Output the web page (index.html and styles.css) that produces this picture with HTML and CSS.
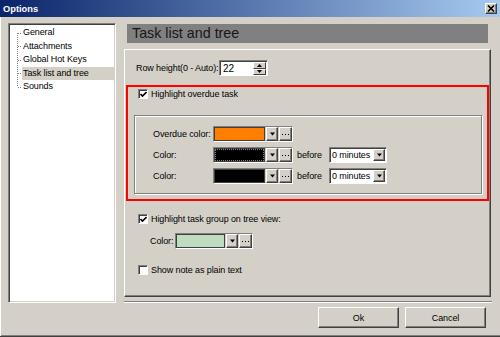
FILE: index.html
```html
<!DOCTYPE html>
<html>
<head>
    <title>Options</title>
    <link rel="stylesheet" href="styles.css">
</head>
<body>
    <div class="window">
        <div class="titlebar">
            <span class="title">Options</span>
            <span class="close">
                <svg width="8" height="7" viewBox="0 0 8 7"><path d="M1 0.5 L7 6.5 M7 0.5 L1 6.5" stroke="#000" stroke-width="1.6"/></svg>
            </span>
        </div>
        <div class="body">
            <div class="main">
                <div class="tree">
                    <svg class="tree-lines" width="5" height="68" viewBox="0 0 5 68">
                        <g stroke="#808080" stroke-dasharray="1 1" fill="none">
                            <path d="M0.5 7 V61"/>
                            <path d="M1 7.5 H5 M1 20.5 H5 M1 34.5 H5 M1 47.5 H5 M1 61.5 H5"/>
                        </g>
                    </svg>
                    <div class="tree-items">
                        <div class="tree-item">General</div>
                        <div class="tree-item">Attachments</div>
                        <div class="tree-item">Global Hot Keys</div>
                        <div class="tree-item selected">Task list and tree</div>
                        <div class="tree-item">Sounds</div>
                    </div>
                </div>
                <div class="page">
                    <div class="page-header">Task list and tree</div>
                    <div class="page-panel">
                        <div class="field-row">
                            <span class="row-label">Row height(0 - Auto):</span>
                            <div class="spin">
                                <span class="spin-value">22</span>
                                <div class="spin-buttons">
                                    <span class="spin-btn"><svg width="5" height="3" viewBox="0 0 5 3"><path d="M2.5 0 L5 3 L0 3 Z" fill="#000"/></svg></span>
                                    <span class="spin-btn"><svg width="5" height="3" viewBox="0 0 5 3"><path d="M0 0 L5 0 L2.5 3 Z" fill="#000"/></svg></span>
                                </div>
                            </div>
                        </div>

                        <div class="red-box">
                            <label class="check-row">
                                <span class="checkbox"><svg width="7" height="7" viewBox="0 0 7 7"><path d="M0.5 3 L2.5 5 L6.5 1" stroke="#000" stroke-width="1.6" fill="none"/></svg></span>
                                Highlight overdue task
                            </label>
                            <div class="group">
                                <div class="color-row">
                                    <span class="color-label">Overdue color:</span>
                                    <div class="color-picker">
                                        <span class="swatch" style="background:#ff8000"></span>
                                        <span class="arrow-btn"><svg width="5" height="4" viewBox="0 0 5 4"><path d="M0 0.5 L5 0.5 L2.5 3.5 Z" fill="#000"/></svg></span>
                                        <span class="dots-btn"><svg width="7" height="1" viewBox="0 0 7 1"><path d="M0 0h1v1H0zM3 0h1v1H3zM6 0h1v1H6z" fill="#000"/></svg></span>
                                    </div>
                                </div>
                                <div class="color-row">
                                    <span class="color-label">Color:</span>
                                    <div class="color-picker">
                                        <span class="swatch focused" style="background:#000"></span>
                                        <span class="arrow-btn"><svg width="5" height="4" viewBox="0 0 5 4"><path d="M0 0.5 L5 0.5 L2.5 3.5 Z" fill="#000"/></svg></span>
                                        <span class="dots-btn"><svg width="7" height="1" viewBox="0 0 7 1"><path d="M0 0h1v1H0zM3 0h1v1H3zM6 0h1v1H6z" fill="#000"/></svg></span>
                                    </div>
                                    <span class="before">before</span>
                                    <div class="combo">
                                        <span class="combo-value">0 minutes</span>
                                        <span class="arrow-btn"><svg width="5" height="4" viewBox="0 0 5 4"><path d="M0 0.5 L5 0.5 L2.5 3.5 Z" fill="#000"/></svg></span>
                                    </div>
                                </div>
                                <div class="color-row">
                                    <span class="color-label">Color:</span>
                                    <div class="color-picker">
                                        <span class="swatch" style="background:#000"></span>
                                        <span class="arrow-btn"><svg width="5" height="4" viewBox="0 0 5 4"><path d="M0 0.5 L5 0.5 L2.5 3.5 Z" fill="#000"/></svg></span>
                                        <span class="dots-btn"><svg width="7" height="1" viewBox="0 0 7 1"><path d="M0 0h1v1H0zM3 0h1v1H3zM6 0h1v1H6z" fill="#000"/></svg></span>
                                    </div>
                                    <span class="before">before</span>
                                    <div class="combo">
                                        <span class="combo-value">0 minutes</span>
                                        <span class="arrow-btn"><svg width="5" height="4" viewBox="0 0 5 4"><path d="M0 0.5 L5 0.5 L2.5 3.5 Z" fill="#000"/></svg></span>
                                    </div>
                                </div>
                            </div>
                        </div>

                        <label class="check-row group-check">
                            <span class="checkbox"><svg width="7" height="7" viewBox="0 0 7 7"><path d="M0.5 3 L2.5 5 L6.5 1" stroke="#000" stroke-width="1.6" fill="none"/></svg></span>
                            Highlight task group on tree view:
                        </label>
                        <div class="color-row tree-color">
                            <span class="small-label">Color:</span>
                            <div class="color-picker">
                                <span class="swatch short" style="background:#c0dcc0"></span>
                                <span class="arrow-btn"><svg width="5" height="4" viewBox="0 0 5 4"><path d="M0 0.5 L5 0.5 L2.5 3.5 Z" fill="#000"/></svg></span>
                                <span class="dots-btn"><svg width="7" height="1" viewBox="0 0 7 1"><path d="M0 0h1v1H0zM3 0h1v1H3zM6 0h1v1H6z" fill="#000"/></svg></span>
                            </div>
                        </div>
                        <label class="check-row note-check">
                            <span class="checkbox"></span>
                            Show note as plain text
                        </label>
                    </div>
                    <div class="separator"></div>
                </div>
            </div>
            <div class="footer">
                <button class="btn">Ok</button>
                <button class="btn">Cancel</button>
            </div>
        </div>
    </div>
</body>
</html>
```

FILE: styles.css
```css
body {
    margin: 0;
    font-family: "Liberation Sans", Arial, sans-serif;
    font-size: 9px;
    letter-spacing: -0.1px;
    color: #000;
}
.window {
    width: 500px;
    height: 337px;
    box-sizing: border-box;
    background-color: #d4d0c8;
    border-bottom: 1px solid #404040;
    box-shadow: inset 1px 0 0 #fff, inset 0 -1px 0 #808080;
    display: flex;
    flex-direction: column;
}
.titlebar {
    height: 17px;
    display: flex;
    align-items: center;
    padding: 0 3px;
    background: linear-gradient(to right, #0a246a, #a6caf0);
}
.title {
    flex: 1;
    color: #fff;
    font-weight: bold;
    font-size: 9.3px;
    letter-spacing: 0;
}
.close {
    width: 12px;
    height: 11px;
    box-sizing: border-box;
    background-color: #d4d0c8;
    border: 1px solid;
    border-color: #fff #404040 #404040 #fff;
    box-shadow: inset -1px -1px 0 #808080;
    display: flex;
    align-items: center;
    justify-content: center;
}
.body {
    flex: 1;
    display: flex;
    flex-direction: column;
    padding: 6px 8px 0 8px;
}
.main {
    display: flex;
    gap: 8px;
}

/* tree */
.tree {
    width: 108px;
    height: 280px;
    box-sizing: border-box;
    background-color: #fff;
    border: 1px solid;
    border-color: #808080 #fff #fff #808080;
    box-shadow: inset 1px 1px 0 #404040, inset -1px -1px 0 #d4d0c8;
    padding: 2px 1px 0 8px;
    display: flex;
    align-items: flex-start;
}
.tree-lines {
    flex: none;
}
.tree-items {
    flex: 1;
}
.tree-item {
    height: 13.5px;
    line-height: 13.5px;
    padding-left: 1px;
    white-space: nowrap;
}
.tree-item.selected {
    background-color: #d4d0c8;
}

/* page */
.page {
    width: 368px;
    display: flex;
    flex-direction: column;
}
.page-header {
    margin: 1px 0 0 3px;
    width: 361px;
    height: 19px;
    box-sizing: border-box;
    background-color: #808080;
    color: #161616;
    font-size: 14.3px;
    letter-spacing: 0;
    line-height: 19px;
    padding-left: 5px;
}
.page-panel {
    margin-top: 6px;
    width: 367px;
    height: 248px;
    box-sizing: border-box;
    border: 1px solid;
    border-color: #fff #404040 #404040 #fff;
    box-shadow: inset -1px -1px 0 #808080;
    padding-top: 10px;
}
.separator {
    margin-top: 4px;
    height: 2px;
    box-sizing: border-box;
    border-top: 1px solid #808080;
    border-bottom: 1px solid #fff;
}

.field-row {
    margin-left: 11px;
    height: 16px;
    display: flex;
    align-items: center;
}
.row-label {
    width: 83px;
}
.spin {
    width: 49px;
    height: 16px;
    box-sizing: border-box;
    background-color: #fff;
    border: 1px solid;
    border-color: #808080 #fff #fff #808080;
    box-shadow: inset 1px 1px 0 #404040;
    display: flex;
    align-items: stretch;
    padding: 1px 1px 0 1px;
}
.spin-value {
    flex: 1;
    padding-left: 2px;
    font-size: 10px;
    line-height: 13px;
}
.spin-buttons {
    width: 13px;
    display: flex;
    flex-direction: column;
}
.spin-btn {
    flex: 1;
    box-sizing: border-box;
    background-color: #d4d0c8;
    border: 1px solid;
    border-color: #fff #404040 #404040 #fff;
    display: flex;
    align-items: center;
    justify-content: center;
}

/* red highlighted section */
.red-box {
    margin: 9px 1px 0 1px;
    height: 116px;
    box-sizing: border-box;
    border: 2px solid #ff0000;
    padding: 1px 5px 0 6px;
}
.check-row {
    height: 11px;
    display: flex;
    align-items: center;
    gap: 3px;
    margin-left: 4px;
    white-space: nowrap;
}
.checkbox {
    width: 10px;
    height: 10px;
    box-sizing: border-box;
    background-color: #fff;
    border: 1px solid;
    border-color: #808080 #fff #fff #808080;
    box-shadow: inset 1px 1px 0 #404040;
    display: flex;
    align-items: center;
    justify-content: center;
    padding: 1px 0 0 1px;
}
.group {
    margin-top: 16px;
    height: 79px;
    box-sizing: border-box;
    border: 1px solid #808080;
    box-shadow: inset 1px 1px 0 #fff, 1px 1px 0 #fff;
    padding: 10px 0 0 18px;
    display: flex;
    flex-direction: column;
    gap: 5px;
}
.color-row {
    height: 16px;
    display: flex;
    align-items: center;
}
.color-label {
    width: 60px;
}
.color-picker {
    height: 16px;
    box-sizing: border-box;
    border: 1px solid;
    border-color: #808080 #fff #fff #808080;
    display: flex;
    align-items: stretch;
    gap: 1px;
}
.swatch {
    width: 51px;
    box-sizing: border-box;
    border: 1px solid #404040;
}
.swatch.short {
    width: 49px;
}
.swatch.focused {
    outline: 1px dotted #808080;
    outline-offset: -2px;
}
.arrow-btn {
    width: 12px;
    box-sizing: border-box;
    background-color: #d4d0c8;
    border: 1px solid;
    border-color: #fff #404040 #404040 #fff;
    box-shadow: inset -1px -1px 0 #808080;
    display: flex;
    align-items: center;
    justify-content: center;
}
.dots-btn {
    width: 13px;
    box-sizing: border-box;
    background-color: #d4d0c8;
    border: 1px solid;
    border-color: #fff #404040 #404040 #fff;
    box-shadow: inset -1px -1px 0 #808080;
    display: flex;
    align-items: center;
    justify-content: center;
}
.before {
    width: 32px;
    margin-left: 4px;
}
.combo {
    width: 58px;
    height: 16px;
    box-sizing: border-box;
    background-color: #fff;
    border: 1px solid;
    border-color: #808080 #fff #fff #808080;
    box-shadow: inset 1px 1px 0 #404040;
    display: flex;
    align-items: stretch;
    padding: 1px 1px 1px 1px;
}
.combo-value {
    flex: 1;
    padding-left: 1px;
    line-height: 13px;
}

.group-check {
    margin: 12px 0 0 13px;
}
.tree-color {
    margin: 9px 0 0 25px;
}
.small-label {
    width: 25px;
}
.note-check {
    margin: 15px 0 0 13px;
}

.footer {
    margin-top: 4px;
    padding-right: 6px;
    display: flex;
    justify-content: flex-end;
    gap: 6px;
}
.btn {
    width: 81px;
    height: 21px;
    box-sizing: border-box;
    background-color: #d4d0c8;
    border: 1px solid;
    border-color: #fff #404040 #404040 #fff;
    box-shadow: inset -1px -1px 0 #808080;
    font-family: "Liberation Sans", Arial, sans-serif;
    font-size: 9px;
    letter-spacing: -0.1px;
    color: #000;
    padding: 0;
}
```
